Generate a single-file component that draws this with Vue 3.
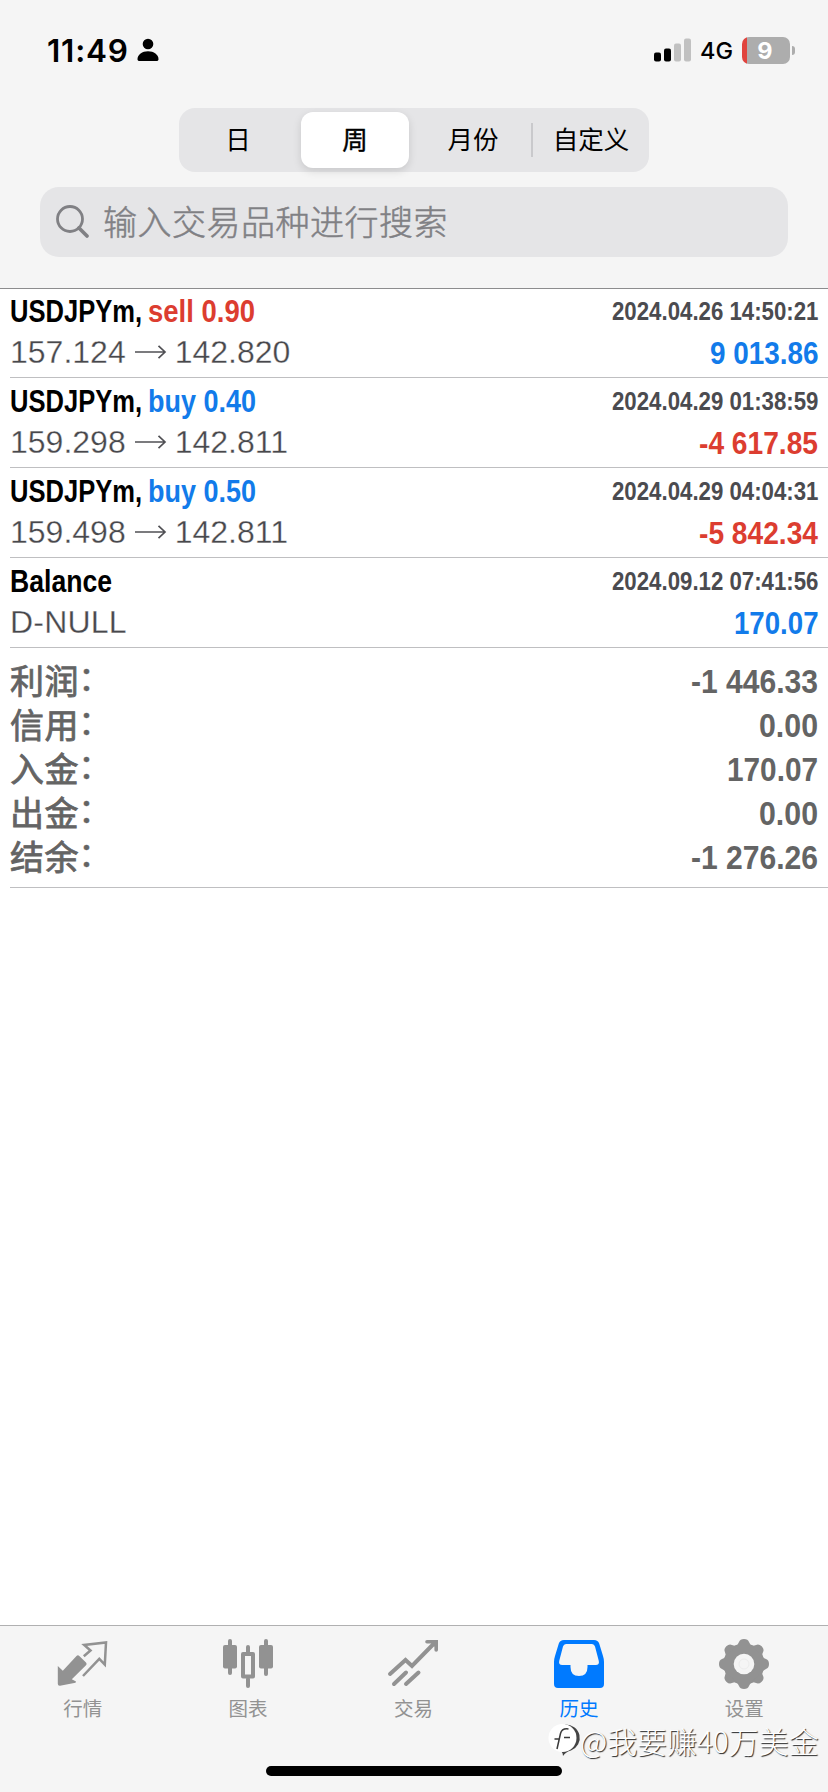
<script setup>
import { h } from 'vue'

const periods = ['日', '周', '月份', '自定义']

const deals = [
  { name: 'USDJPYm,', nameW: 132, k: 0.81, side: 'sell 0.90', sideW: 107, kind: 'red', from: '157.124', to: '142.820', time: '2024.04.26 14:50:21', value: '9 013.86', valueW: 108.5, tone: 'blue' },
  { name: 'USDJPYm,', nameW: 132, k: 0.81, side: 'buy 0.40', sideW: 108, kind: 'blue', from: '159.298', to: '142.811', time: '2024.04.29 01:38:59', value: '-4 617.85', valueW: 119, tone: 'red' },
  { name: 'USDJPYm,', nameW: 132, k: 0.81, side: 'buy 0.50', sideW: 108, kind: 'blue', from: '159.498', to: '142.811', time: '2024.04.29 04:04:31', value: '-5 842.34', valueW: 119, tone: 'red' },
  { name: 'Balance', nameW: 102, k: 0.85, note: 'D-NULL', time: '2024.09.12 07:41:56', value: '170.07', valueW: 84.5, tone: 'blue' },
]

const totals = [
  { label: '利润', value: '-1 446.33', w: 127 },
  { label: '信用', value: '0.00', w: 59 },
  { label: '入金', value: '170.07', w: 91 },
  { label: '出金', value: '0.00', w: 59 },
  { label: '结余', value: '-1 276.26', w: 127 },
]

// Condensed text: squeezed horizontally by k and set to a fixed advance width.
const Fit = ({ t, w, k = 0.87 }) =>
  h('svg', { width: w, height: 40 }, [
    h('text', { x: 0, y: 30, transform: `scale(${k} 1)`, textLength: w / k, lengthAdjust: 'spacingAndGlyphs', fill: 'currentColor' }, t),
  ])
Fit.props = ['t', 'w', 'k']
</script>

<template>
  <div class="screen">
    <header class="top">
      <div class="status">
        <div class="clock">
          <span class="time">11:49</span>
          <svg class="person" width="22" height="24" viewBox="0 0 22 24">
            <circle cx="11" cy="6" r="5.3" />
            <path d="M.5 21.2C.5 16.8 5.2 13.3 11 13.3s10.5 3.5 10.5 7.9c0 1.2-.8 1.8-2 1.8h-17c-1.200 0-2-.6-2-1.800z" />
          </svg>
        </div>
        <div class="net">
          <svg width="38" height="24" viewBox="0 0 38 24">
            <rect x="0" y="14.500" width="7" height="9" rx="2" />
            <rect x="10" y="10.500" width="7" height="13" rx="2" />
            <rect x="20" y="5.500" width="7" height="18" rx="2" fill="#c1c1c1" />
            <rect x="30" y=".5" width="7" height="23" rx="2" fill="#c1c1c1" />
          </svg>
          <span class="lte">4G</span>
          <span class="battery">9</span>
          <span class="nub"></span>
        </div>
      </div>
      <div class="segments">
        <div v-for="(p, i) in periods" :key="p" class="seg" :class="{ on: i === 1, ruled: i === 3 }">{{ p }}</div>
      </div>
      <div class="search">
        <svg width="36" height="36" viewBox="0 0 36 36" fill="none" stroke="#808084" stroke-linecap="round">
          <circle cx="15" cy="14" r="12.500" stroke-width="2.800" />
          <path d="M24 23l8 8" stroke-width="3.800" />
        </svg>
        <span>输入交易品种进行搜索</span>
      </div>
    </header>

    <main>
      <div v-for="d in deals" :key="d.time" class="deal">
        <div class="line">
          <div class="title">
            <Fit class="cond" :t="d.name" :w="d.nameW" :k="d.k" />
            <Fit v-if="d.side" class="cond" :class="d.kind" :t="d.side" :w="d.sideW" />
          </div>
          <Fit class="cond date" :t="d.time" :w="206.5" />
        </div>
        <div class="line second">
          <div class="price">
            <template v-if="d.from">
              <span>{{ d.from }}</span>
              <svg class="arrow" width="32" height="14" viewBox="0 0 32 14" fill="none" stroke="#505054" stroke-width="1.700">
                <path d="M0 7h30M23.500 .8l6.500 6.200-6.500 6.200" />
              </svg>
              <span>{{ d.to }}</span>
            </template>
            <span v-else class="note">{{ d.note }}</span>
          </div>
          <Fit class="cond" :class="d.tone" :t="d.value" :w="d.valueW" />
        </div>
      </div>

      <div class="totals">
        <div v-for="t in totals" :key="t.label" class="total">
          <div class="label">{{ t.label }}<span class="colon">：</span></div>
          <Fit class="cond sum" :t="t.value" :w="t.w" />
        </div>
      </div>
    </main>

    <footer>
      <nav>
        <div class="tab">
          <svg width="52" height="52" viewBox="0 0 52 52">
            <path fill="#929292" d="M.8 28l5 4.800L19.500 18a2 2 0 0 1 2.800-.1l6.700 6.600a2 2 0 0 1 0 2.800L14.800 41.200l4.200 2.400-.5 1.200L3 47.700q-2.200.2-2.200-2z" />
            <path fill="none" stroke="#929292" stroke-width="2.500" d="M26.800 18.200L33.500 12.500 27.200 7 49 4.500 47.800 26.500 42.300 20.800 26 38" />
          </svg>
          <span>行情</span>
        </div>
        <div class="tab">
          <svg width="52" height="52" viewBox="0 0 52 52" fill="#929292">
            <rect x="6" y="1" width="4" height="36" rx="2" />
            <rect x="1" y="7" width="14" height="23.500" rx="2" />
            <rect x="42" y="1" width="4" height="37" rx="2" />
            <rect x="37" y="7" width="14" height="23.500" rx="2" />
            <rect x="24" y="7" width="4" height="9" rx="2" />
            <rect x="24" y="39" width="4" height="11" rx="2" />
            <rect x="21" y="16" width="10" height="22.500" fill="none" stroke="#929292" stroke-width="4" stroke-linejoin="round" />
          </svg>
          <span>图表</span>
        </div>
        <div class="tab">
          <svg width="52" height="52" viewBox="0 0 52 52" fill="none" stroke="#929292" stroke-width="4" stroke-linecap="round">
            <path d="M3 36L18.500 22l6.500 6L46 6.500M7 46L19 34.500M19 46L31.500 34.500" />
            <path stroke-width="3.600" d="M40 3.800h9.200V12" />
            <path fill="#929292" stroke="none" d="M41 2h10v10z" />
          </svg>
          <span>交易</span>
        </div>
        <div class="tab current">
          <svg width="52" height="52" viewBox="0 0 52 52">
            <path fill="#007aff" fill-rule="evenodd" d="M11 2h30q4 0 5.200 3.500L50 18q1 3 1 6v22q0 4-4 4H5q-4 0-4-4V24q0-3 1-6L5.800 5.500Q7 2 11 2zM13 6q-2.300 0-3 2.500L6.200 23q-.8 4 3 4H17.500v2q0 9 8.500 9t8.500-9v-2h8.300q3.800 0 3-4L42 8.500q-.7-2.500-3-2.500z" />
          </svg>
          <span>历史</span>
        </div>
        <div class="tab">
          <svg width="52" height="52" viewBox="0 0 52 52">
            <g fill="#929292">
              <circle cx="26" cy="26" r="20.500" />
              <path v-for="n in 8" :key="n" :transform="`rotate(${n * 45} 26 26)`" d="M17.500 8q2.500-1 3.500-4 1-3 5-3t5 3q1 3 3.500 4z" />
            </g>
            <circle cx="26" cy="26" r="10.300" fill="#f5f5f5" />
            <circle cx="26" cy="26" r="5" fill="none" stroke="#ececec" stroke-width="1" />
          </svg>
          <span>设置</span>
        </div>
      </nav>
      <div class="home"></div>
      <div class="mark">
        <svg width="32" height="34" viewBox="0 0 32 34">
          <path fill="#444" d="M17 1.500A14 13.500 0 0 1 23 27.500Q18 28.500 15 33q0-3-1.500-4.500z" />
          <circle cx="14.500" cy="15" r="14" fill="#fff" />
          <path fill="none" stroke="#3a3a3a" stroke-width="1.500" d="M20.500 6q-6.500-1-8 4.500L9 26M6.500 16h5M16 14.500h6" />
        </svg>
        <span>@我要赚40万美金</span>
      </div>
    </footer>
  </div>
</template>

<style>
body {
  margin: 0;
}
</style>

<style scoped>
.screen {
  width: 828px;
  height: 1792px;
  display: flex;
  flex-direction: column;
  background: #fff;
  overflow: hidden;
  font-family: "Liberation Sans", "Noto Sans CJK SC", sans-serif;
  color: #000;
}
.screen svg {
  display: block;
  flex: none;
  overflow: visible;
}
.top {
  box-sizing: border-box;
  height: 289px;
  background: #f5f5f5;
  border-bottom: 1px solid #8c8c8e;
}
.status {
  height: 108px;
  box-sizing: border-box;
  padding: 30px 33px 0 47px;
  display: flex;
  justify-content: space-between;
}
.clock,
.net {
  display: flex;
  align-items: center;
  height: 40px;
  font-family: Inter, sans-serif;
}
.time {
  width: 81px;
  font-size: 31.500px;
  font-weight: 600;
  letter-spacing: 0.800px;
  white-space: nowrap;
}
.person {
  margin-left: 9px;
}
.lte {
  width: 34px;
  margin-left: 8px;
  font-size: 23.500px;
  font-weight: 500;
}
.battery {
  width: 48px;
  height: 27px;
  margin-left: 8px;
  box-sizing: border-box;
  padding-right: 2px;
  border-radius: 7px;
  background: linear-gradient(90deg, #e0443e 5px, #adadad 5px);
  color: #fff;
  font-size: 23.500px;
  font-weight: 700;
  line-height: 27px;
  text-align: center;
}
.nub {
  width: 3px;
  height: 9px;
  margin-left: 2px;
  border-radius: 0 4px 4px 0;
  background: #adadad;
}
.segments {
  width: 470px;
  height: 64px;
  margin: 0 auto;
  box-sizing: border-box;
  padding: 4px;
  border-radius: 16px;
  background: #e5e5e7;
  display: grid;
  grid-template-columns: 110px 125px 110px 1fr;
}
.seg {
  display: flex;
  align-items: center;
  justify-content: center;
  font-size: 25.500px;
  line-height: 56px;
}
.seg.on {
  margin: 0 9px 0 8px;
  border-radius: 12px;
  background: #fff;
  -webkit-text-stroke: 0.400px #000;
  box-shadow: 0 3px 8px rgba(0, 0, 0, 0.13);
}
.seg.ruled {
  padding-left: 9px;
  background: linear-gradient(#c9c9cc, #c9c9cc) 3px 50% / 2px 34px no-repeat;
}
.search {
  width: 748px;
  height: 70px;
  margin: 15px 0 0 40px;
  border-radius: 19px;
  background: #e5e5e7;
  display: flex;
  align-items: center;
  color: #808084;
  font-size: 34px;
  font-weight: 300;
  letter-spacing: 0.500px;
}
.search span {
  margin-top: -3px;
  -webkit-text-stroke: 0.500px #808084;
}
.search svg {
  margin: 1px 12px 0 15px;
}
main {
  flex: 1;
}
.deal {
  height: 90px;
  margin-left: 10px;
  padding-right: 10px;
  box-sizing: border-box;
  border-bottom: 1px solid #bfbfc1;
}
.deal:first-child {
  height: 89px;
}
.line {
  display: flex;
  justify-content: space-between;
  height: 42px;
  padding-top: 4px;
  box-sizing: border-box;
}
.deal:first-child .line:first-child {
  height: 41px;
  padding-top: 3px;
}
.line.second {
  height: 40px;
  padding-top: 4px;
}
.title {
  display: flex;
  gap: 6px;
}
.cond {
  font-family: "Liberation Sans", sans-serif;
  font-size: 31px;
  font-weight: 700;
}
.date {
  font-size: 25px;
  color: #4b4b4f;
  margin-top: -2px;
}
.red {
  color: #dc3d30;
}
.blue {
  color: #127bea;
}
.price {
  display: flex;
  align-items: center;
  height: 36px;
  font-size: 32px;
  line-height: 36px;
  color: #48484c;
  -webkit-text-stroke: 0.300px #fff;
}
.note {
  letter-spacing: 0.200px;
}
.arrow {
  margin: 0 8px 0 9px;
}
.totals {
  margin-left: 10px;
  padding: 12px 10px 0 0;
  height: 240px;
  box-sizing: border-box;
  border-bottom: 1px solid #bfbfc1;
}
.total {
  height: 44px;
  display: flex;
  justify-content: space-between;
  color: #646464;
}
.label {
  margin-top: -2px;
  font-family: "Noto Sans CJK SC", sans-serif;
  font-size: 34px;
  line-height: 44px;
  letter-spacing: 0.500px;
  -webkit-text-stroke: 0.800px #646464;
}
.colon {
  position: relative;
  top: -3px;
  left: -1px;
  -webkit-text-stroke: 0.400px #646464;
}
.sum {
  font-size: 33px;
  margin-top: 3px;
}
footer {
  position: relative;
  height: 167px;
  box-sizing: border-box;
  border-top: 1px solid #b0b0b1;
  background: #f5f5f5;
}
nav {
  display: grid;
  grid-template-columns: repeat(5, 165.400px);
  justify-content: center;
  margin-left: -1px;
}
.tab {
  padding-top: 12px;
  display: flex;
  flex-direction: column;
  align-items: center;
  color: #929292;
  font-size: 19.500px;
  line-height: 28px;
}
.tab span {
  margin-top: 5px;
}
.tab.current {
  color: #007aff;
}
.home {
  position: absolute;
  left: 266px;
  bottom: 16px;
  width: 296px;
  height: 10px;
  border-radius: 5px;
  background: #000;
}
.mark {
  position: absolute;
  left: 548px;
  top: 96px;
  display: flex;
  align-items: center;
  color: #fff;
  font-family: "Noto Sans CJK SC", sans-serif;
  font-size: 29.900px;
  font-weight: 300;
  line-height: 36px;
  white-space: nowrap;
  text-shadow: 1px 1px 1px #222;
}
</style>
